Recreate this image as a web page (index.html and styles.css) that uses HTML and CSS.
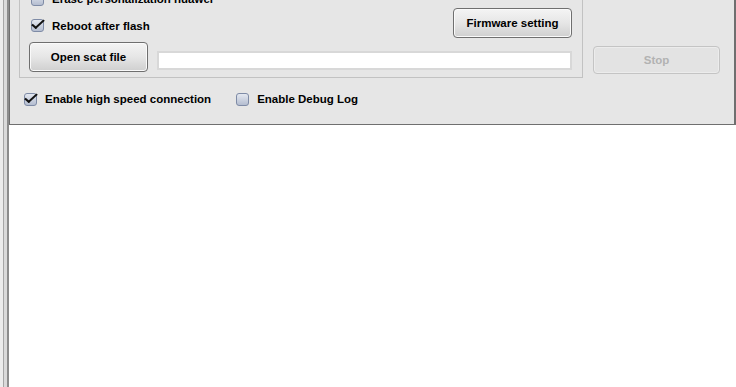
FILE: index.html
```html
<!DOCTYPE html>
<html lang="en">
<head>
    <meta charset="UTF-8">
    <title>Flash tool</title>
    <link rel="stylesheet" href="styles.css">
</head>
<body>
    <div class="side"></div>
    <div class="main">
        <div class="panel">
            <div class="top">
                <div class="group">
                    <div class="row row-erase">
                        <label class="check"><span class="box"></span>Erase personalization huawei</label>
                    </div>
                    <div class="row row-reboot">
                        <label class="check"><span class="box checked"></span>Reboot after flash</label>
                        <button class="btn">Firmware setting</button>
                    </div>
                    <div class="row row-file">
                        <button class="btn">Open scat file</button>
                        <input class="path" type="text">
                    </div>
                </div>
                <div class="right">
                    <button class="btn stop" disabled>Stop</button>
                </div>
            </div>
            <div class="options">
                <label class="check"><span class="box checked"></span>Enable high speed connection</label>
                <label class="check"><span class="box"></span>Enable Debug Log</label>
            </div>
        </div>
        <div class="log"></div>
    </div>
</body>
</html>
```

FILE: styles.css
```css
html, body {
    height: 100%;
}
body {
    margin: 0;
    display: flex;
    background: #fff;
    font-family: "Liberation Sans", Arial, sans-serif;
    font-size: 11.5px;
    font-weight: bold;
    color: #000;
    overflow: hidden;
}
.side {
    width: 9px;
    flex-shrink: 0;
    background: linear-gradient(to right, #ececec 0, #ececec 3px, #a6a6a6 3px, #a6a6a6 4px, #dadada 4px, #dadada 7px, #8c8c8c 7px, #8c8c8c 9px);
}
.main {
    flex: 1;
    display: flex;
    flex-direction: column;
}
.panel {
    background: #e6e6e6;
    border: 1px solid #6f6f6f;
    border-top: none;
    border-right-width: 2px;
    padding: 0 13px 18px 9px;
}
.top {
    display: flex;
    gap: 10px;
}
.group {
    width: 564px;
    margin-top: -10px;
    padding: 1px 10px 5px 9px;
    border: 1px solid #c2c2c2;
    box-sizing: border-box;
    display: flex;
    flex-direction: column;
    gap: 3px;
}
.row {
    display: flex;
    align-items: center;
}
.row-erase {
    height: 14px;
    padding-left: 2px;
    margin-bottom: -1px;
}
.row-reboot {
    height: 30px;
    justify-content: space-between;
    padding-left: 2px;
}
.row-reboot .check {
    margin-top: 5px;
}
.row-file {
    height: 30px;
    gap: 9px;
    margin-top: 1px;
}
.check {
    display: flex;
    align-items: center;
    gap: 8px;
    white-space: nowrap;
}
.box {
    width: 11px;
    height: 11px;
    border: 1px solid #7e8ba6;
    border-radius: 3px;
    background: linear-gradient(#e4e8f0, #b4bdd0);
    position: relative;
    flex-shrink: 0;
}
.box.checked::after {
    content: "";
    position: absolute;
    left: 3px;
    top: -3px;
    width: 4px;
    height: 10px;
    border: solid #111;
    border-width: 0 2px 2px 0;
    transform: rotate(40deg) skewX(-8deg);
}
.btn {
    width: 119px;
    height: 30px;
    font: inherit;
    color: #000;
    border: 1px solid #6f6f6f;
    border-radius: 4px;
    background: linear-gradient(#f4f4f4, #e6e6e6 50%, #cfcfcf);
    box-shadow: inset 0 0 0 1px #fafafa;
}
.path {
    width: 415px;
    height: 19px;
    margin-top: 7px;
    box-sizing: border-box;
    border: 2px solid #d8d8d8;
    background: #fff;
    padding: 0;
}
.right {
    padding-top: 46px;
}
.stop {
    width: 127px;
    height: 28px;
    color: #b2b2b2;
    border-color: #c4c4c4;
    background: #e3e3e3;
    box-shadow: inset 0 0 0 1px #ececec;
}
.options {
    display: flex;
    gap: 25px;
    margin: 14px 0 0 5px;
    height: 14px;
}
.log {
    flex: 1;
    background: #fff;
}
```
